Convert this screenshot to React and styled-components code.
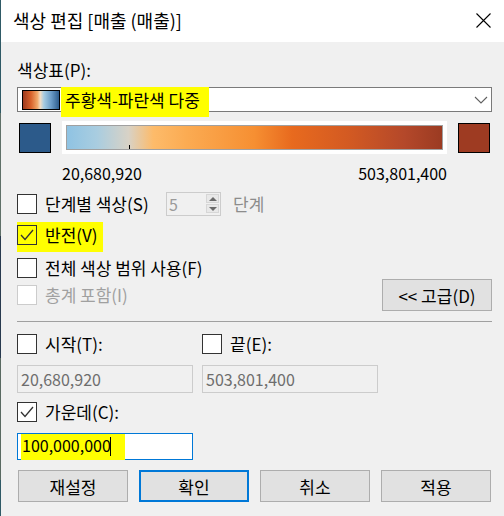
import styled, { createGlobalStyle } from "styled-components";

const GlobalStyle = createGlobalStyle`
  html, body {
    margin: 0;
    padding: 0;
    background: #f0f0f0;
  }
  body {
    font-family: "Noto Sans CJK KR", "Noto Sans", sans-serif;
    font-size: 17px;
    color: #000;
  }
  * {
    box-sizing: border-box;
  }
`;

const range = { min: 20680920, max: 503801400, center: 100000000 };
const fmt = (n) => n.toLocaleString("en-US");

const Screen = styled.div`
  display: flex;
  width: 504px;
  height: 516px;
  overflow: hidden;
`;

// the desktop peeking out at the left of the window
const DesktopEdge = styled.div`
  flex: none;
  width: 1px;
  background: linear-gradient(
    to bottom,
    #2f5a66 0 113px,
    #5f7068 113px 236px,
    #283a4f 236px 358px,
    #5a6a62 358px 480px,
    #2f5a66 480px
  );
`;

const Dialog = styled.div`
  flex: 1;
  display: flex;
  flex-direction: column;
  background: #f0f0f0;
`;

const TitleBar = styled.div`
  height: 42px;
  flex: none;
  background: #fff;
  display: flex;
  align-items: center;
  justify-content: space-between;
  padding: 0 13px 0 12px;
`;

const Title = styled.span`
  font-size: 18px;
  line-height: 24px;
  margin-top: -2px;
`;

const CloseButton = styled.span`
  display: flex;
  width: 15px;
  height: 15px;
  margin-top: -1px;
`;

const Body = styled.div`
  display: flex;
  flex-direction: column;
  padding: 17px 12px 0 16px;
`;

const Label = styled.div`
  line-height: 22px;
  height: 22px;
`;

const Select = styled.div`
  margin-top: 6px;
  height: 25px;
  background: #fff;
  border: 1px solid #7a7a7a;
  display: flex;
  align-items: center;
  padding: 0 3px 0 4px;
`;

const PaletteSwatch = styled.span`
  flex: none;
  width: 38px;
  height: 20px;
  border: 1px solid #000;
  background: linear-gradient(
    to right,
    #9e3a1e 0%,
    #d9612a 22%,
    #f1a86a 40%,
    #f3dcc4 48%,
    #a6cbe2 58%,
    #6c9dc8 78%,
    #2d5c8c 100%
  );
`;

const Mark = styled.span`
  background: #ffff00;
  padding: ${(p) => p.$pad};
  margin: ${(p) => p.$margin || "0"};
`;

const SelectText = styled.span`
  flex: 1;
  margin-left: 1px;
  line-height: 22px;
  white-space: nowrap;
`;

const Chevron = styled.span`
  display: flex;
`;

const GradientRow = styled.div`
  margin: 9px 2px 0 2px;
  height: 33px;
  display: flex;
  align-items: center;
  justify-content: space-between;
`;

const EndSwatch = styled.span`
  width: 32px;
  height: 30px;
  border: 1px solid #000;
  background: ${(p) => p.$color};
`;

const RampFrame = styled.div`
  width: 385px;
  height: 33px;
  background: #fff;
  padding: 4px;
`;

const Ramp = styled.div`
  position: relative;
  height: 25px;
  border: 1px solid #a0a0a0;
  background: linear-gradient(
    to right,
    #8fc3e3 0%,
    #a9cde0 8%,
    #d8d2c6 16.4%,
    #fdbb6a 23%,
    #fbab52 32%,
    #f68f32 50%,
    #e86a1e 60%,
    #d35a22 75%,
    #b4482a 90%,
    #9b3b22 100%
  );
`;

const Tick = styled.span`
  position: absolute;
  bottom: 0;
  width: 1px;
  height: 4px;
  background: #000;
`;

const ValueRow = styled.div`
  margin-top: 8px;
  padding: 0 45px;
  display: flex;
  justify-content: space-between;
  font-size: 16px;
  line-height: 22px;
`;

const CheckRow = styled.div`
  display: flex;
  align-items: center;
  height: ${(p) => p.$h || 22}px;
  margin-top: ${(p) => p.$mt || 0}px;
  color: ${(p) => (p.$disabled ? "#a0a0a0" : "#000")};
`;

const Box = styled.span`
  position: relative;
  flex: none;
  width: 20px;
  height: 20px;
  border: 1px solid ${(p) => (p.$disabled ? "#cccccc" : "#333333")};
  background: ${(p) => (p.$clear ? "transparent" : "#fff")};
  margin-right: 8px;
  svg {
    position: absolute;
    left: -1px;
    top: -1px;
  }
`;

const CheckLabel = styled.span`
  line-height: 22px;
  white-space: nowrap;
  width: ${(p) => (p.$w ? `${p.$w}px` : "auto")};
  flex: none;
`;

const MarkedGroup = styled.span`
  display: inline-flex;
  align-items: center;
  background: #ffff00;
  padding: 2px 5px 6px 0;
  margin: -2px -5px -6px 0;
`;

const Spin = styled.div`
  width: 55px;
  height: 24px;
  border: 1px solid #cccccc;
  display: flex;
  color: #9a9a9a;
  font-size: 16px;
`;

const SpinValue = styled.span`
  flex: 1;
  padding-left: 2px;
  line-height: 22px;
`;

const SpinArrows = styled.span`
  width: 14px;
  display: flex;
  flex-direction: column;
  padding: 1px 1px 2px 0;
`;

const SpinArrow = styled.span`
  flex: 1;
  display: flex;
  align-items: center;
  justify-content: center;
  background: #e8e8e8;
  border: 1px solid #d6d6d6;
  & + & {
    margin-top: 1px;
  }
  &::after {
    content: "";
    border-left: 4px solid transparent;
    border-right: 4px solid transparent;
    ${(p) =>
      p.$up
        ? "border-bottom: 4px solid #6a6a6a;"
        : "border-top: 4px solid #6a6a6a;"}
  }
`;

const Unit = styled.span`
  margin-left: 12px;
  color: #8c8c8c;
  line-height: 22px;
`;

const TotalRow = styled.div`
  height: 32px;
  display: flex;
  align-items: center;
  justify-content: space-between;
`;

const Button = styled.button`
  height: 32px;
  width: ${(p) => (p.$w ? `${p.$w}px` : "auto")};
  margin: 0;
  padding: 0;
  font: inherit;
  font-size: 17px;
  color: #000;
  background: #e1e1e1;
  border: ${(p) => (p.$default ? "2px solid #0078d7" : "1px solid #adadad")};
`;

const Separator = styled.div`
  margin-top: 10px;
  height: 1px;
  background: #a0a0a0;
`;

const Fields = styled.div`
  margin-top: 11px;
  display: grid;
  grid-template-columns: 176px 176px;
  column-gap: 9px;
  row-gap: 10px;
`;

const TextField = styled.div`
  height: ${(p) => p.$h || 28}px;
  width: 176px;
  display: flex;
  align-items: center;
  padding-left: ${(p) => (p.$active ? 4 : 3)}px;
  border: 1px solid ${(p) => (p.$active ? "#0078d7" : "#cccccc")};
  background: ${(p) => (p.$active ? "#fff" : "#f0f0f0")};
  color: ${(p) => (p.$active ? "#000" : "#6d6d6d")};
  font-size: 16px;
  line-height: 22px;
`;

const Caret = styled.span`
  display: inline-block;
  width: 1px;
  height: 19px;
  margin-left: -1px;
  background: #000;
  vertical-align: -4px;
`;

const ButtonBar = styled.div`
  margin-top: 10px;
  padding-left: 1px;
  display: grid;
  grid-template-columns: repeat(4, 110px);
  column-gap: 11px;
`;

const CheckMark = () => (
  <svg width="20" height="20" viewBox="0 0 20 20">
    <polyline
      points="4,10 8,14.5 16,5"
      fill="none"
      stroke="#333"
      strokeWidth="1.3"
    />
  </svg>
);

const Checkbox = ({ checked, disabled, clear }) => (
  <Box $disabled={disabled} $clear={clear}>
    {checked && <CheckMark />}
  </Box>
);

export default function App() {
  const tickPos = ((range.center - range.min) / (range.max - range.min)) * 100;

  return (
    <Screen>
      <GlobalStyle />
      <DesktopEdge />
      <Dialog>
        <TitleBar>
          <Title>색상 편집 [매출 (매출)]</Title>
          <CloseButton>
            <svg width="15" height="15" viewBox="0 0 15 15">
              <path d="M0.5 0.5 L14.5 14.5 M14.5 0.5 L0.5 14.5" stroke="#000" strokeWidth="1.1" />
            </svg>
          </CloseButton>
        </TitleBar>

        <Body>
          <Label>색상표(P):</Label>
          <Select>
            <PaletteSwatch />
            <SelectText>
              <Mark $pad="0 9px 5px 4px">주황색-파란색 다중</Mark>
            </SelectText>
            <Chevron>
              <svg width="14" height="8" viewBox="0 0 14 8">
                <polyline points="1,1 7,7 13,1" fill="none" stroke="#606060" strokeWidth="1.1" />
              </svg>
            </Chevron>
          </Select>

          <GradientRow>
            <EndSwatch $color="#2c5a8a" />
            <RampFrame>
              <Ramp>
                <Tick style={{ left: `${tickPos}%` }} />
              </Ramp>
            </RampFrame>
            <EndSwatch $color="#9e3b22" />
          </GradientRow>

          <ValueRow>
            <span>{fmt(range.min)}</span>
            <span>{fmt(range.max)}</span>
          </ValueRow>

          <CheckRow $h={24} $mt={8}>
            <Checkbox />
            <CheckLabel $w={121}>단계별 색상(S)</CheckLabel>
            <Spin>
              <SpinValue>5</SpinValue>
              <SpinArrows>
                <SpinArrow $up />
                <SpinArrow />
              </SpinArrows>
            </Spin>
            <Unit>단계</Unit>
          </CheckRow>

          <CheckRow $mt={8}>
            <MarkedGroup>
              <Checkbox checked clear />
              <CheckLabel>반전(V)</CheckLabel>
            </MarkedGroup>
          </CheckRow>

          <CheckRow $mt={11}>
            <Checkbox />
            <CheckLabel>전체 색상 범위 사용(F)</CheckLabel>
          </CheckRow>

          <TotalRow>
            <CheckRow $disabled>
              <Checkbox disabled />
              <CheckLabel>총계 포함(I)</CheckLabel>
            </CheckRow>
            <Button $w={110}>&lt;&lt; 고급(D)</Button>
          </TotalRow>

          <Separator />

          <Fields>
            <CheckRow>
              <Checkbox />
              <CheckLabel>시작(T):</CheckLabel>
            </CheckRow>
            <CheckRow>
              <Checkbox />
              <CheckLabel>끝(E):</CheckLabel>
            </CheckRow>
            <TextField>{fmt(range.min)}</TextField>
            <TextField>{fmt(range.max)}</TextField>
          </Fields>

          <CheckRow $mt={8}>
            <Checkbox checked />
            <CheckLabel>가운데(C):</CheckLabel>
          </CheckRow>

          <TextField $active $h={27} style={{ marginTop: 10 }}>
            <Mark $pad="0 14px 4px 1px" $margin="0 0 0 -1px">
              {fmt(range.center)}
              <Caret />
            </Mark>
          </TextField>

          <ButtonBar>
            <Button>재설정</Button>
            <Button $default>확인</Button>
            <Button>취소</Button>
            <Button>적용</Button>
          </ButtonBar>
        </Body>
      </Dialog>
    </Screen>
  );
}
